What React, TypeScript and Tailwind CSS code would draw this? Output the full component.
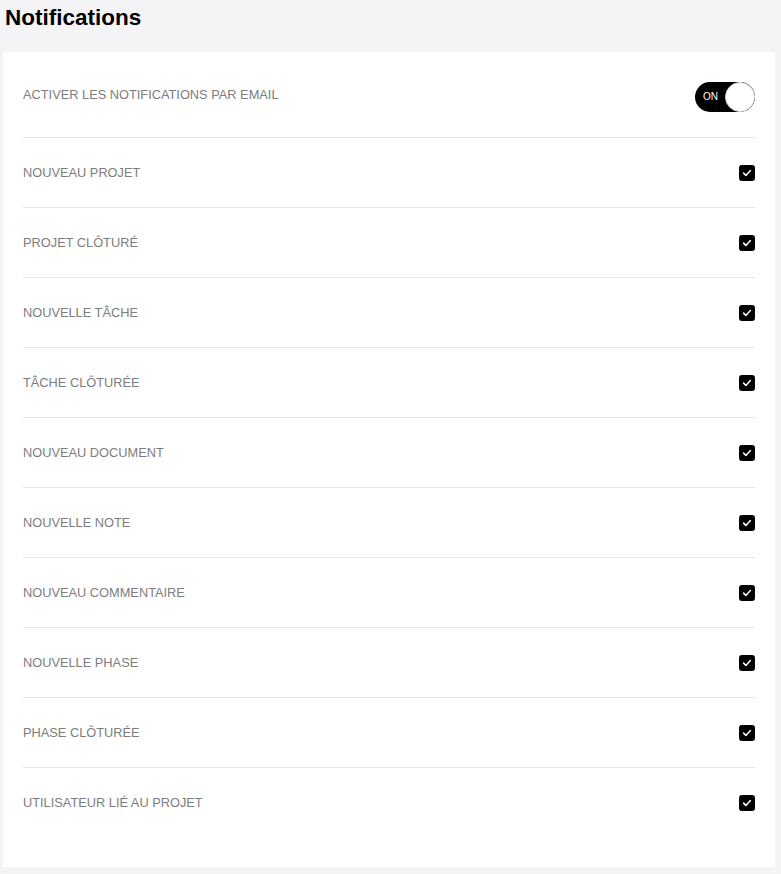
const items = [
  "Nouveau projet",
  "Projet clôturé",
  "Nouvelle tâche",
  "Tâche clôturée",
  "Nouveau document",
  "Nouvelle note",
  "Nouveau commentaire",
  "Nouvelle phase",
  "Phase clôturée",
  "Utilisateur lié au projet",
];

function Toggle() {
  return (
    <div className="mt-[4px] flex h-[30px] w-[60px] items-center justify-between rounded-full bg-black pl-[8px]">
      <span className="text-[10px] leading-none text-white">ON</span>
      <span className="h-[30px] w-[30px] rounded-full border border-gray-300 bg-white" />
    </div>
  );
}

function Check() {
  return (
    <span className="flex h-[16px] w-[16px] items-center justify-center rounded-[3px] bg-black">
      <svg viewBox="0 0 16 16" className="h-[12px] w-[12px]" fill="none">
        <path d="M3.5 8.2l3 3 6-6.4" stroke="white" strokeWidth="2" strokeLinecap="round" strokeLinejoin="round" />
      </svg>
    </span>
  );
}

export default function App() {
  return (
    <div className="min-h-[874px] bg-[#f4f4f6] font-['Liberation_Sans',Arial,sans-serif]">
      <h1 className="pl-[5px] pt-[3px] text-[22.5px] font-bold leading-[30px] text-black">Notifications</h1>
      <div className="ml-[3px] mt-[19px] w-[772px] bg-white px-[20px] pb-[29px]">
        <div className="flex h-[86px] items-center justify-between border-b border-[#e5e5e5]">
          <span className="text-[12.8px] uppercase text-[#7d7d7d]">Activer les notifications par email</span>
          <Toggle />
        </div>
        {items.map((label, i) => (
          <div
            key={label}
            className={
              i === items.length - 1
                ? "flex h-[70px] items-center justify-between"
                : "flex h-[70px] items-center justify-between border-b border-[#e5e5e5]"
            }
          >
            <span className="text-[12.8px] uppercase text-[#7d7d7d]">{label}</span>
            <Check />
          </div>
        ))}
      </div>
    </div>
  );
}
